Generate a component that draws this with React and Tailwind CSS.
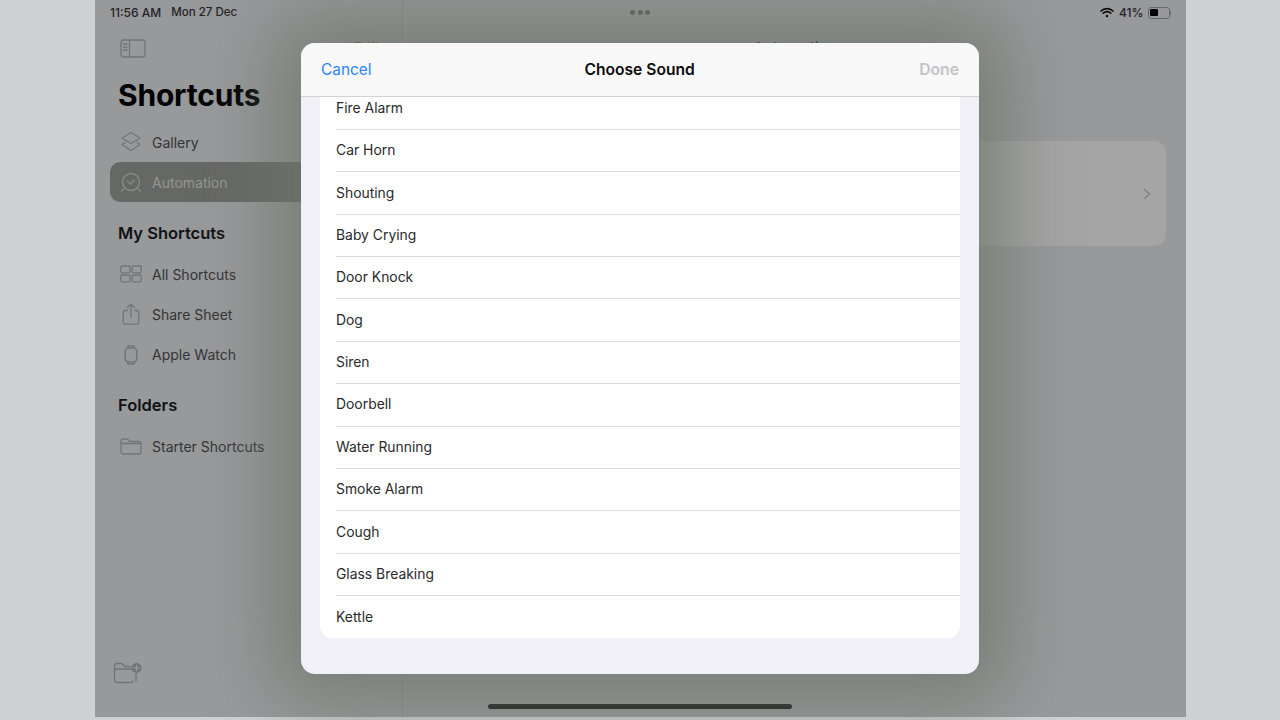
const rows = ["Fire Alarm","Car Horn","Shouting","Baby Crying","Door Knock","Dog","Siren","Doorbell","Water Running","Smoke Alarm","Cough","Glass Breaking","Kettle"];
const ic = { fill: "none", stroke: "#737476", strokeWidth: 1.3, strokeLinecap: "round", strokeLinejoin: "round" };

function NavRow({ icon, label, selected, className = "" }) {
  return (
    <div className={"flex items-center h-[40px] rounded-l-[10px] " + (selected ? "bg-[#666865] text-[#959694] " : "text-[#333436] ") + className}>
      <div className="w-[42px] flex justify-center shrink-0">{icon}</div>
      <span className="text-[14px]">{label}</span>
    </div>
  );
}

export default function App() {
  return (
    <div className="relative w-[1280px] h-[720px] bg-[#cfd0d2] overflow-hidden font-['Inter','Liberation_Sans',sans-serif]">
      <div className="relative ml-[95px] w-[1091px] h-[717px] bg-[#98999b] flex overflow-hidden">
        {/* sidebar */}
        <div className="w-[308px] h-full flex flex-col border-r border-[#8c8d8d] shrink-0 pl-[15px]">
          <div className="h-[24px] pt-[1px] flex items-center text-[11.5px] font-medium text-[#232426] gap-[10px]">
            <span className="text-[12px]">11:56 AM</span><span>Mon 27 Dec</span>
          </div>
          <div className="pl-[10px] pt-[15px] h-[39px]">
            <svg width="26" height="19" viewBox="0 0 26 19" {...ic}>
              <rect x="1" y="1" width="24" height="17" rx="2.5" />
              <path d="M9.5 1v17M3.5 5h3.5M3.5 8h3.5M3.5 11h3.5" />
            </svg>
          </div>
          <div className="pl-[8px] pt-[12px] text-[30px] leading-[40px] font-bold text-black tracking-[-0.2px]">Shortcuts</div>
          <NavRow className="mt-[7px]" label="Gallery" icon={
            <svg width="22" height="22" viewBox="0 0 22 22" {...ic}>
              <path d="M11 1.5l9 5.5-9 5.5L2 7z" />
              <path d="M5 10l-3 2 9 6 9-6-3-2" transform="translate(0 1.5)" />
            </svg>} />
          <NavRow selected label="Automation" icon={
            <svg width="22" height="22" viewBox="0 0 22 22" {...ic} stroke="#8b8c8a">
              <circle cx="11" cy="11" r="8.5" />
              <path d="M7.5 10.5l3 2.5 3.5-4M1.5 20l2.5-2M20.5 20L18 18" />
            </svg>} />
          <div className="pl-[8px] mt-[11px] h-[40px] flex items-center text-[16.5px] font-semibold text-[#111214]">My Shortcuts</div>
          <NavRow className="mt-[1px]" label="All Shortcuts" icon={
            <svg width="22" height="18" viewBox="0 0 22 18" {...ic}>
              <rect x="0.7" y="1" width="9.3" height="6.8" rx="1.5" />
              <rect x="12" y="1" width="9.3" height="6.8" rx="1.5" />
              <rect x="0.7" y="10" width="9.3" height="6.8" rx="1.5" />
              <rect x="12" y="10" width="9.3" height="6.8" rx="1.5" />
            </svg>} />
          <NavRow label="Share Sheet" icon={
            <svg width="18" height="22" viewBox="0 0 18 22" {...ic}>
              <path d="M5.5 7.5H3a1.8 1.8 0 0 0-1.8 1.8v10a1.8 1.8 0 0 0 1.8 1.8h12a1.8 1.8 0 0 0 1.8-1.8v-10A1.8 1.8 0 0 0 15 7.5h-2.5" />
              <path d="M9 14V1.5M5.5 4.5L9 1l3.5 3.5" />
            </svg>} />
          <NavRow className="mt-[0.5px]" label="Apple Watch" icon={
            <svg width="14" height="20" viewBox="0 0 14 20" {...ic} strokeWidth="1.6">
              <rect x="1.2" y="3" width="11.6" height="14" rx="3.5" />
              <path d="M3.5 3l.6-2h5.8l.6 2M3.5 17l.6 2h5.8l.6-2" />
            </svg>} />
          <div className="pl-[8px] mt-[11px] h-[40px] flex items-center text-[16.5px] font-semibold text-[#111214]">Folders</div>
          <NavRow className="mt-[1px]" label="Starter Shortcuts" icon={
            <svg width="22" height="17" viewBox="0 0 22 17" {...ic}>
              <path d="M1 14V3a2 2 0 0 1 2-2h4.5l2 2.3H19a2 2 0 0 1 2 2V14a2 2 0 0 1-2 2H3a2 2 0 0 1-2-2zM1 5.5h20" />
            </svg>} />
          <div className="mt-auto pl-[3px] pb-[33px]">
            <svg width="29" height="22" viewBox="0 0 29 22" {...ic}>
              <path d="M20 19a2 2 0 0 1-2 1.5H4a2.5 2.5 0 0 1-2.5-2.5V4A2.5 2.5 0 0 1 4 1.5h5l2.5 3H17M1.5 7H20M23 11v8" />
              <circle cx="23.5" cy="6" r="5" fill="#737476" stroke="none" />
              <path d="M23.5 3.5v5M21 6h5" stroke="#98999b" />
            </svg>
          </div>
        </div>
        {/* detail */}
        <div className="flex-1 relative">
          <div className="absolute left-[227px] top-[9.5px] flex gap-[2.7px]">
            <span className="w-[5px] h-[5px] rounded-full bg-[#5f6062]" /><span className="w-[5px] h-[5px] rounded-full bg-[#5f6062]" /><span className="w-[5px] h-[5px] rounded-full bg-[#5f6062]" />
          </div>
          <div className="absolute right-[15px] top-0 h-[24px] pt-[1px] flex items-center gap-[5px] text-[12px] font-medium text-[#232426]">
            <svg width="14" height="11" viewBox="0 0 14 11" fill="none" stroke="#0a0a0a" strokeWidth="1.7" strokeLinecap="round">
              <path d="M1 4a8.6 8.6 0 0 1 12 0M3.3 6.2a5.3 5.3 0 0 1 7.4 0" />
              <circle cx="7" cy="9" r="1.2" fill="#0a0a0a" stroke="none" />
            </svg>
            <span>41%</span>
            <div className="flex items-center ml-[-1px]">
              <div className="w-[22px] h-[12px] rounded-[3px] border border-[#69696b] p-[1.5px]"><div className="w-[8px] h-full rounded-[1px] bg-black" /></div>
              <div className="w-[1.5px] h-[4px] bg-[#69696b] rounded-r-full" />
            </div>
          </div>
          {/* nav bar behind the sheet: only the tops of the letters show */}
          <span className="absolute left-[-50px] top-[37px] text-[15px] text-[#4c4e4c]">Edit</span>
          <span className="absolute left-[350px] top-[37px] text-[15px] font-semibold text-[#2a2c2a]">Automation</span>
          <div className="absolute left-[400px] top-[141px] w-[363px] h-[105px] rounded-r-[12px] bg-[#a5a5a5] flex items-center justify-end pr-[15px]">
            <svg width="8" height="12" viewBox="0 0 8 12" fill="none" stroke="#818284" strokeWidth="1.6" strokeLinecap="round" strokeLinejoin="round"><path d="M1.5 1.5L6.5 6l-5 4.5" /></svg>
          </div>
        </div>
        {/* home indicator */}
        <div className="absolute left-[393px] top-[704px] w-[304px] h-[5px] rounded-full bg-[#1b1e1d]" />
      </div>

      {/* sheet */}
      <div className="absolute left-[301px] top-[43px] w-[678px] h-[631px] rounded-[14px] bg-[#f1f0f6] overflow-hidden shadow-[0_0_70px_28px_rgba(110,118,106,0.75)] flex flex-col">
        <div className="h-[54px] shrink-0 bg-[#f8f8f8] border-b border-[#d2d2d4] relative flex items-center justify-between px-[20px]">
          <span className="text-[15.4px] text-[#2a86f5]">Cancel</span>
          <span className="absolute left-[283.5px] text-[15.6px] font-semibold text-[#0a0a0a]">Choose Sound</span>
          <span className="text-[15.7px] font-semibold text-[#c4c4c6]">Done</span>
        </div>
        <div className="overflow-hidden">
          <div className="-mt-[9.5px] mx-[19px] w-[640px] bg-white rounded-b-[12px] pl-[16px]">
            {rows.map((r, i) => (
              <div key={r} className={"flex items-center text-[13.9px] text-[#2a2a2c] " + (i < rows.length - 1 ? "h-[42.38px] border-b border-[#dcdcde]" : "h-[42px]")}>{r}</div>
            ))}
          </div>
        </div>
      </div>
    </div>
  );
}
